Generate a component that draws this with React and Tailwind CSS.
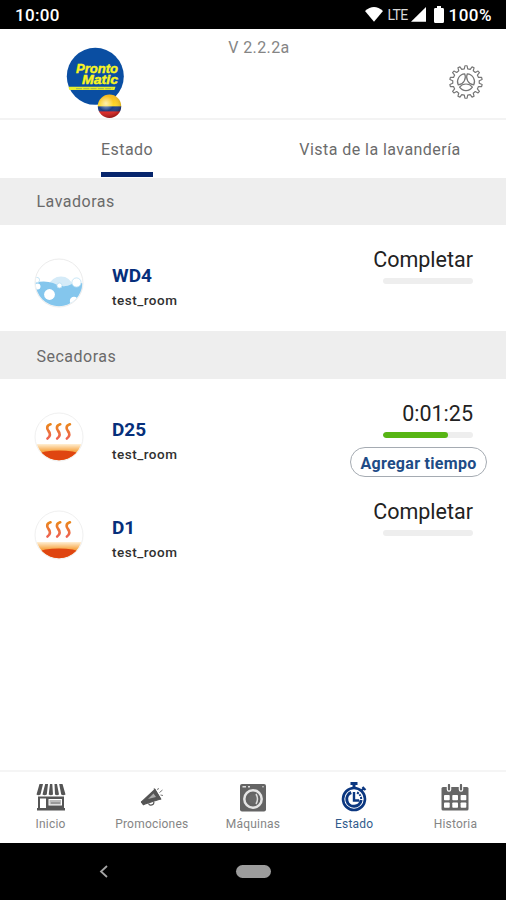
import React from "react";

const TEETH = 14;
const gearPath = (() => {
  const pts = [];
  const step = (Math.PI * 2) / TEETH;
  for (let i = 0; i < TEETH; i++) {
    const a = i * step - Math.PI / 2;
    [[-0.28, 13.3], [-0.15, 16.3], [0.15, 16.3], [0.28, 13.3]].forEach(([o, r]) => {
      pts.push(`${(18 + r * Math.cos(a + o * step)).toFixed(2)} ${(18 + r * Math.sin(a + o * step)).toFixed(2)}`);
    });
  }
  return `M${pts.join("L")}Z`;
})();

function GearIcon() {
  return (
    <svg className="h-9 w-9" viewBox="0 0 36 36" fill="none" stroke="#777" strokeWidth="1.2" strokeLinejoin="round">
      <path d={gearPath} />
      {[0, 120, 240].map((r) => (
        <path key={r} transform={`rotate(${r} 18 18)`} d="M11.600 23.200Q14 20 18 20Q22 20 24.400 23.200Q22.200 26.600 18 26.600Q13.800 26.600 11.600 23.200Z" />
      ))}
    </svg>
  );
}

function Logo() {
  return (
    <svg className="h-[74px] w-[62px]" viewBox="0 0 62 74" role="img">
      <defs>
        <linearGradient id="flag" x1="0" y1="0" x2="0" y2="1">
          <stop offset="0" stopColor="#f4b51b" />
          <stop offset=".48" stopColor="#ffd925" />
          <stop offset=".53" stopColor="#173f8d" />
          <stop offset=".69" stopColor="#203b7d" />
          <stop offset=".75" stopColor="#e02824" />
          <stop offset="1" stopColor="#a8181b" />
        </linearGradient>
        <radialGradient id="gloss" cx=".35" cy=".38" r=".65">
          <stop offset="0" stopColor="#fff" stopOpacity=".65" />
          <stop offset=".5" stopColor="#fff" stopOpacity="0" />
          <stop offset="1" stopColor="#3b0b00" stopOpacity=".2" />
        </radialGradient>
      </defs>
      <circle cx="29.3" cy="32.3" r="28.5" fill="#0a4ea2" />
      <g fill="#faf521" stroke="#faf521" strokeWidth=".4" fontFamily="Liberation Sans, sans-serif" fontWeight="700" fontStyle="italic">
        <text x="10" y="29" fontSize="12.5" textLength="42" lengthAdjust="spacingAndGlyphs">Pronto</text>
        <text x="16" y="40" fontSize="12.5" textLength="36" lengthAdjust="spacingAndGlyphs">Matic</text>
      </g>
      <path d="M2.500 42.800H49.500L48.400 46H3.400Z" fill="#e9ee2c" />
      <path d="M10 44.700H47" stroke="#8fae5a" strokeWidth=".9" strokeDasharray="6 1.3" />
      <circle cx="43.500" cy="62.200" r="11.700" fill="url(#flag)" />
      <circle cx="43.500" cy="62.200" r="11.700" fill="url(#gloss)" />
    </svg>
  );
}

function StatusBar() {
  return (
    <div className="flex h-[29px] shrink-0 items-center justify-between bg-black pr-[14px] pl-[15px] text-white">
      <span className="text-[17px] leading-[20px] font-medium tracking-[0.3px]">10:00</span>
      <div className="flex items-center">
        <svg className="h-[15px] w-[18px]" viewBox="0 0 18 15" fill="#fff"><path d="M0 4Q9-4 18 4L9 14.8Z" /></svg>
        <span className="ml-1 w-[22px] text-[14px] leading-[20px] tracking-[-0.6px] text-[#d8d8d8]">LTE</span>
        <svg className="ml-[2px] h-[15px] w-[15px]" viewBox="0 0 15 15" fill="#fff"><path d="M15 0V14.7H0Z" /></svg>
        <svg className="ml-2 h-[17px] w-[10px]" viewBox="0 0 10 17" fill="#fff"><path d="M3 0H7V2H8.6Q10 2 10 3.4V15.5Q10 17 8.6 17H1.4Q0 17 0 15.5V3.4Q0 2 1.4 2H3Z" /></svg>
        <span className="ml-1 text-[17px] leading-[20px] font-medium tracking-[0.5px]">100%</span>
      </div>
    </div>
  );
}

function WasherIcon() {
  return (
    <svg className="h-[50px] w-[50px]" viewBox="0 0 50 50">
      <defs><clipPath id="drum"><circle cx="25" cy="25" r="23.3" /></clipPath></defs>
      <circle cx="25" cy="25" r="24" fill="#fff" stroke="#ececec" />
      <g clipPath="url(#drum)">
        <path d="M14 28Q18 18.500 27 18.500Q36 18.500 39 28Z" fill="#d5ebf8" />
        <path d="M0 25Q10 22 19 25Q29 31 38 26Q43 23 50 26V50H0Z" fill="#84c6ed" />
        <g fill="#fff">
          <circle cx="15.500" cy="36.500" r="5.400" />
          <circle cx="42.500" cy="24.500" r="4.600" stroke="#b9dff4" strokeWidth=".8" />
          <circle cx="25.500" cy="27.500" r="2.500" stroke="#b9dff4" strokeWidth=".8" />
          <circle cx="3.500" cy="28.500" r="3" />
          <circle cx="40" cy="43" r="4.200" />
          <circle cx="3" cy="22" r="2.600" stroke="#b9dff4" strokeWidth=".8" />
        </g>
      </g>
    </svg>
  );
}

function DryerIcon() {
  return (
    <svg className="h-[50px] w-[50px]" viewBox="0 0 50 50">
      <defs>
        <clipPath id="dryer"><circle cx="25" cy="25" r="23.3" /></clipPath>
        <linearGradient id="glow" x1="0" y1="0" x2="0" y2="1">
          <stop offset="0" stopColor="#fff0d5" />
          <stop offset=".4" stopColor="#f7a545" />
          <stop offset="1" stopColor="#ee7420" />
        </linearGradient>
        <linearGradient id="steam" x1="0" y1="0" x2="0" y2="1">
          <stop offset="0" stopColor="#ea861d" />
          <stop offset="1" stopColor="#ee6252" />
        </linearGradient>
      </defs>
      <circle cx="25" cy="25" r="24" fill="#fff" stroke="#f0f0f0" />
      <g clipPath="url(#dryer)">
        <rect x="0" y="32" width="50" height="18" fill="url(#glow)" />
        <path d="M0 43.500Q9 38.500 25 38.500Q41 38.500 50 43.500V50H0Z" fill="#df4510" />
      </g>
      {[0, 9.7, 19.4].map((x) => (
        <path key={x} transform={`translate(${x} 0)`} d="M16.500 12.300C12.500 13.500 12.500 16.500 14.500 19C16.700 21.500 16.500 24.500 13.500 26.500" fill="none" stroke="url(#steam)" strokeWidth="2.700" strokeLinecap="round" />
      ))}
    </svg>
  );
}

function Section({ children }) {
  return <div className="flex items-center bg-[#eeeeee] pt-px pl-[36.500px] text-[16px] tracking-[0.5px] text-[#6a6a6a]">{children}</div>;
}

function Machine({ icon, name, children }) {
  return (
    <div className="flex items-start pr-[33px] pl-[34px]">
      <div className="mt-[12px]">{icon}</div>
      <div className="mt-[18px] ml-[28px] flex-1">
        <div className="text-[19px] leading-[24px] font-bold text-[#062f7b]">{name}</div>
        <div className="mt-[2px] text-[13.500px] leading-[20px] font-medium tracking-[0.5px] text-[#303030]">test_room</div>
      </div>
      <div className="flex flex-col items-end">{children}</div>
    </div>
  );
}

function Progress({ label, done }) {
  return (
    <>
      <div className="mt-px text-[21.500px] leading-[26px] text-[#222]">{label}</div>
      <div className="mt-[5px] h-[6px] w-[90px] overflow-hidden rounded-full bg-[#eeeeee]">
        {done ? <div className="h-full w-[65px] rounded-full bg-[#57b514]" /> : null}
      </div>
    </>
  );
}

const StoreIcon = () => (
  <svg className="h-7 w-[30px]" viewBox="0 0 30 28" fill="#555">
    <path d="M3.5 0H7L4.500 10.500Q2.500 12 .5 10.500ZM9.200 0H12L10.800 10.500Q8.600 12 6.500 10.500ZM14 0H16.300L17 10.500Q15 12 12.700 10.500ZM18.500 0H21L23 10.500Q21 12 19 10.500ZM23.200 0H26.500L29.500 10.500Q27.200 12 25.200 10.500Z" />
    <path fillRule="evenodd" d="M2 12.500H28V24H29V26.500H1V24H2ZM4 14.500V24H10V14.500ZM12.500 15V21.500H26V15Z" />
    <path d="M13.500 16H25V20.500H13.500Z" fill="#bbb" />
    <path d="M15 19H24" stroke="#777" />
  </svg>
);

const MegaphoneIcon = () => (
  <svg className="h-7 w-[30px]" viewBox="0 0 30 28" fill="none" stroke="#555" strokeWidth="1.2">
    <path d="M4.500 18L18 5.500L23.500 15L6.500 20.500Z" fill="#555" strokeLinejoin="round" />
    <path d="M11 15L16.500 9.500L19 13Z" fill="#aaa" stroke="none" />
    <path d="M17 4.500L24 15.500M11.500 19.500Q13 22.500 16.500 20L17 18" />
    <path d="M20.500 6L21.500 4M22.500 8.500L25.500 6M23.500 11L26 11.500" strokeWidth=".8" />
    <path d="M4.500 17.500L7 21" strokeWidth="1.600" />
  </svg>
);

const WasherNavIcon = () => (
  <svg className="h-7 w-[30px]" viewBox="0 0 30 28">
    <rect x="2" y="0" width="26" height="27.500" rx="2" fill="#646464" />
    <path d="M4.500 2.700H8M10 2.700H12" stroke="#ddd" strokeWidth="1.400" />
    <circle cx="15" cy="15" r="8.700" fill="#646464" stroke="#e5e5e5" strokeWidth="2.500" />
    <circle cx="15" cy="15" r="4.800" fill="#696969" />
    <path d="M18 10Q21 15 18 20" fill="none" stroke="#ddd" strokeWidth="1.500" />
    <circle cx="25" cy="2.700" r=".8" fill="#ddd" />
  </svg>
);

const StopwatchIcon = () => (
  <svg className="h-[30px] w-[30px]" viewBox="0 0 30 30" fill="none" stroke="#0b3780">
    <circle cx="15" cy="17" r="11" strokeWidth="2.600" />
    <path d="M11.500 1.500H18.500M15 1V6" strokeWidth="3" />
    <path d="M22.500 8.500L25.500 5.500M23.500 5L26.500 8" strokeWidth="2.200" />
    <path d="M12.200 10.500A7.200 7.200 0 1 0 22.100 18" strokeWidth="3" />
    <path d="M15 10V18.500H20" strokeWidth="2.400" />
    <path d="M18 10.500Q22 12.500 22.200 17" strokeWidth="2" strokeDasharray="2 1" />
  </svg>
);

const CalendarIcon = () => (
  <svg className="h-7 w-[30px]" viewBox="0 0 30 28">
    <path d="M3 3H27Q28.500 3 28.500 4.500V25Q28.500 26.500 27 26.500H3Q1.500 26.500 1.500 25V4.500Q1.500 3 3 3Z" fill="#666" />
    <path d="M9 1V5.500M21 1V5.500" stroke="#fff" strokeWidth="4.500" strokeLinecap="round" />
    <path d="M9 1V5.500M21 1V5.500" stroke="#666" strokeWidth="2.200" strokeLinecap="round" />
    <g fill="#fff">
      {[4, 12.3, 20.6].map((x) => [11, 18.5].map((y) => <rect key={`${x}-${y}`} x={x} y={y} width="5.700" height="5.200" rx=".8" />))}
    </g>
  </svg>
);

const tabs = [
  ["Inicio", StoreIcon],
  ["Promociones", MegaphoneIcon],
  ["Máquinas", WasherNavIcon],
  ["Estado", StopwatchIcon],
  ["Historia", CalendarIcon],
];

export default function App() {
  return (
    <div className="flex h-[900px] w-[506px] flex-col overflow-hidden bg-white font-['Roboto',sans-serif]">
      <StatusBar />
      <header className="grid h-[91px] shrink-0 grid-cols-[228px_62px_1fr] border-b-2 border-[#f3f3f3]">
        <div className="pt-[15px] pl-[66px]"><Logo /></div>
        <div className="pt-2 text-center text-[16px] leading-[22px] tracking-[0.4px] whitespace-nowrap text-[#858585]">V 2.2.2a</div>
        <div className="flex justify-end pt-[35px] pr-[22px]"><GearIcon /></div>
      </header>
      <nav className="grid h-[58px] shrink-0 grid-cols-2 text-[16px] tracking-[0.45px] text-[#6b6b6b]">
        <div className="flex justify-center pl-px"><span className="flex h-[57px] w-[52px] items-center border-b-[5px] border-[#06256c] pt-[7px]">Estado</span></div>
        <div className="flex h-[57px] items-center justify-center pt-[3px] pl-px">Vista de la lavandería</div>
      </nav>
      <div className="grid h-[47px] shrink-0 bg-[#eeeeee]"><Section>Lavadoras</Section></div>
      <div className="h-[106px] shrink-0 pt-[21px]">
        <Machine icon={<WasherIcon />} name="WD4"><Progress label="Completar" /></Machine>
      </div>
      <div className="grid h-[48px] shrink-0 bg-[#eeeeee] pt-[2px]"><Section>Secadoras</Section></div>
      <main className="flex-1 pt-[21px]">
        <div className="h-[98px]">
          <Machine icon={<DryerIcon />} name="D25">
            <Progress label="0:01:25" done />
            <button className="mt-[9px] -mr-[14px] h-[30px] w-[137px] rounded-full border border-[#a5abb2] pt-[2px] text-[16px] leading-[28px] font-bold tracking-[0.3px] whitespace-nowrap text-[#204b86]">Agregar tiempo</button>
          </Machine>
        </div>
        <Machine icon={<DryerIcon />} name="D1"><Progress label="Completar" /></Machine>
      </main>
      <footer className="grid h-[73px] shrink-0 grid-cols-5 border-t-2 border-[#f5f5f5]">
        {tabs.map(([label, Icon]) => (
          <div key={label} className={label === "Estado" ? "flex flex-col items-center text-[#315b8c]" : "flex flex-col items-center text-[#858585]"}>
            <div className="flex h-[41px] items-end pb-px"><Icon /></div>
            <span className="mt-[3px] text-[12px] leading-[16px] tracking-[0.2px]">{label}</span>
          </div>
        ))}
      </footer>
      <div className="grid h-[57px] shrink-0 grid-cols-[1fr_35px_1fr] items-center bg-black">
        <svg className="ml-[99px] h-[13px] w-[9px]" viewBox="0 0 9 13" fill="none" stroke="#a5a5a5" strokeWidth="1.800"><path d="M8 1L2 6.500L8 12" /></svg>
        <div className="h-[13px] rounded-full bg-[#9c9c9c]" />
      </div>
    </div>
  );
}
